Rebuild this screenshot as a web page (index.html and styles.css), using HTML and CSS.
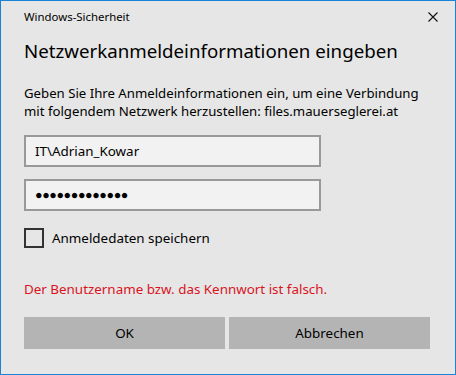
FILE: index.html
```html
<!DOCTYPE html>
<html lang="de">
<head>
<meta charset="utf-8">
<link rel="stylesheet" href="styles.css">
</head>
<body>
<div class="window">
  <div class="titlebar">
    <span class="title">Windows-Sicherheit</span>
    <svg class="close" width="10" height="10" viewBox="0 0 10 10"><path d="M0.5 0.5 L9.5 9.5 M9.5 0.5 L0.5 9.5" stroke="#111" stroke-width="1.1" fill="none"/></svg>
  </div>
  <div class="content">
    <h1 class="heading">Netzwerkanmeldeinformationen eingeben</h1>
    <p class="desc">Geben Sie Ihre Anmeldeinformationen ein, um eine Verbindung<br>mit folgendem Netzwerk herzustellen: files.mauerseglerei.at</p>
    <div class="field">IT\Adrian_Kowar</div>
    <div class="field dots">●●●●●●●●●●●●●</div>
    <label class="check"><span class="box"></span><span>Anmeldedaten speichern</span></label>
    <p class="error">Der Benutzername bzw. das Kennwort ist falsch.</p>
    <div class="buttons">
      <div class="btn">OK</div>
      <div class="btn">Abbrechen</div>
    </div>
  </div>
</div>
</body>
</html>
```
FILE: styles.css
```css
html, body { margin: 0; padding: 0; }
body { font-family: "Noto Sans", "Open Sans", sans-serif; color: #000; }
.window {
  width: 456px; height: 375px; box-sizing: border-box;
  border: 1px solid #1883d7; background: #e6e6e6;
}
.titlebar {
  display: flex; justify-content: space-between; align-items: flex-start;
  padding: 8px 17px 0 23px; height: 24px;
}
.title { font-size: 11.4px; line-height: 16px; color: #000; }
.close { margin-top: 3px; }
.content { padding: 0 24px 0 23px; }
.heading { margin: 4px 0 0; font-size: 18.7px; font-weight: 400; line-height: 28px; }
.desc { margin: 19px 0 0; font-size: 13.2px; line-height: 18px; white-space: nowrap; }
.field {
  box-sizing: border-box; width: 297px; height: 32px; margin-top: 15px;
  border: 2px solid #999; background: #f2f2f2; padding: 0 9px;
  font-size: 13.4px; line-height: 28px;
}
.field + .field { margin-top: 12px; }
.dots { font-size: 12.5px; letter-spacing: -0.4px; }
.check { display: flex; align-items: center; gap: 8px; margin-top: 17px; font-size: 13.4px; }
.box { width: 20px; height: 20px; box-sizing: border-box; border: 2px solid #333; }
.error { margin: 32px 0 0; color: #d9141e; font-size: 13.4px; line-height: 18px; }
.buttons { display: flex; gap: 4px; margin-top: 19px; width: 406px; }
.btn { flex: 1; height: 32px; background: #b4b4b4; display: flex; align-items: center; justify-content: center; font-size: 13.4px; }
```
